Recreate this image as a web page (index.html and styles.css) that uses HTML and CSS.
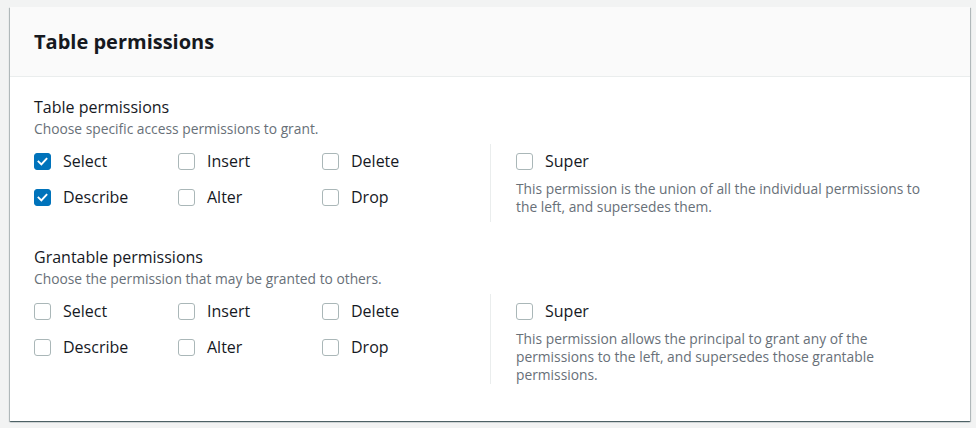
FILE: index.html
```html
<!DOCTYPE html>
<html lang="en">
<head>
<meta charset="utf-8">
<title>Table permissions</title>
<link rel="stylesheet" href="styles.css">
</head>
<body>
<div class="card">
  <div class="card-header"><h2 class="card-title">Table permissions</h2></div>
  <div class="card-body">
    <section class="field">
      <div class="field-label">Table permissions</div>
      <div class="field-desc">Choose specific access permissions to grant.</div>
      <div class="perm-grid">
        <div class="perm-left">
          <label class="cb"><span class="box checked"><svg viewBox="0 0 17 17"><path d="M4 8.6 L7.2 11.8 L13 5.4"/></svg></span>Select</label>
          <label class="cb"><span class="box"></span>Insert</label>
          <label class="cb"><span class="box"></span>Delete</label>
          <label class="cb"><span class="box checked"><svg viewBox="0 0 17 17"><path d="M4 8.6 L7.2 11.8 L13 5.4"/></svg></span>Describe</label>
          <label class="cb"><span class="box"></span>Alter</label>
          <label class="cb"><span class="box"></span>Drop</label>
        </div>
        <div class="perm-right">
          <label class="cb"><span class="box"></span>Super</label>
          <p class="super-desc">This permission is the union of all the individual permissions to the left, and supersedes them.</p>
        </div>
      </div>
    </section>
    <section class="field field-second">
      <div class="field-label">Grantable permissions</div>
      <div class="field-desc">Choose the permission that may be granted to others.</div>
      <div class="perm-grid">
        <div class="perm-left">
          <label class="cb"><span class="box"></span>Select</label>
          <label class="cb"><span class="box"></span>Insert</label>
          <label class="cb"><span class="box"></span>Delete</label>
          <label class="cb"><span class="box"></span>Describe</label>
          <label class="cb"><span class="box"></span>Alter</label>
          <label class="cb"><span class="box"></span>Drop</label>
        </div>
        <div class="perm-right">
          <label class="cb"><span class="box"></span>Super</label>
          <p class="super-desc">This permission allows the principal to grant any of the permissions to the left, and supersedes those grantable permissions.</p>
        </div>
      </div>
    </section>
  </div>
</div>
</body>
</html>
```

FILE: styles.css
```css
* { box-sizing: border-box; }

html, body {
  margin: 0;
  background: #f2f3f3;
}

body {
  padding: 7px 6px 8px 10px;
  font-family: "Open Sans", "Noto Sans", sans-serif;
  color: #16191f;
}

.card {
  width: 960px;
  background: #ffffff;
  box-shadow: 0 1px 1px 0 rgba(0, 28, 36, 0.5), 1px 1px 1px 0 rgba(0, 28, 36, 0.2), -1px 1px 1px 0 rgba(0, 28, 36, 0.2);
}

.card-header {
  height: 70px;
  background: #fafafa;
  border-bottom: 1px solid #eaeded;
  padding: 22px 24px 0;
}

.card-title {
  margin: 0;
  font-size: 20px;
  line-height: 26px;
  font-weight: 700;
  color: #16191f;
}

.card-body {
  padding: 19px 24px 37px;
}

.field-label {
  font-size: 16px;
  line-height: 22px;
}

.field-desc {
  margin-top: 2px;
  font-size: 13.8px;
  line-height: 18px;
  color: #687078;
}

.field-second {
  margin-top: 24px;
}

.perm-grid {
  margin-top: 6px;
  display: grid;
  grid-template-columns: 456px 456px;
}

.perm-left {
  display: grid;
  grid-template-columns: repeat(3, 144px);
  grid-auto-rows: 24px;
  row-gap: 12px;
  padding: 5px 0 13px;
  align-content: start;
}

.perm-right {
  border-left: 1px solid #eaeded;
  padding: 5px 20px 0 25px;
}

.cb {
  display: flex;
  align-items: center;
  height: 24px;
  font-size: 16px;
  line-height: 22px;
  color: #16191f;
}

.box {
  flex: none;
  width: 17px;
  height: 17px;
  margin-right: 12px;
  border: 1px solid #aab7b8;
  border-radius: 3px;
  background: #ffffff;
  display: flex;
}

.box.checked {
  background: #0073bb;
  border-color: #0073bb;
}

.box svg {
  width: 15px;
  height: 15px;
}

.box svg path {
  fill: none;
  stroke: #ffffff;
  stroke-width: 2.2;
  stroke-linecap: square;
}

.super-desc {
  margin: 7px 0 0;
  font-size: 13.8px;
  line-height: 18px;
  color: #687078;
}
```
